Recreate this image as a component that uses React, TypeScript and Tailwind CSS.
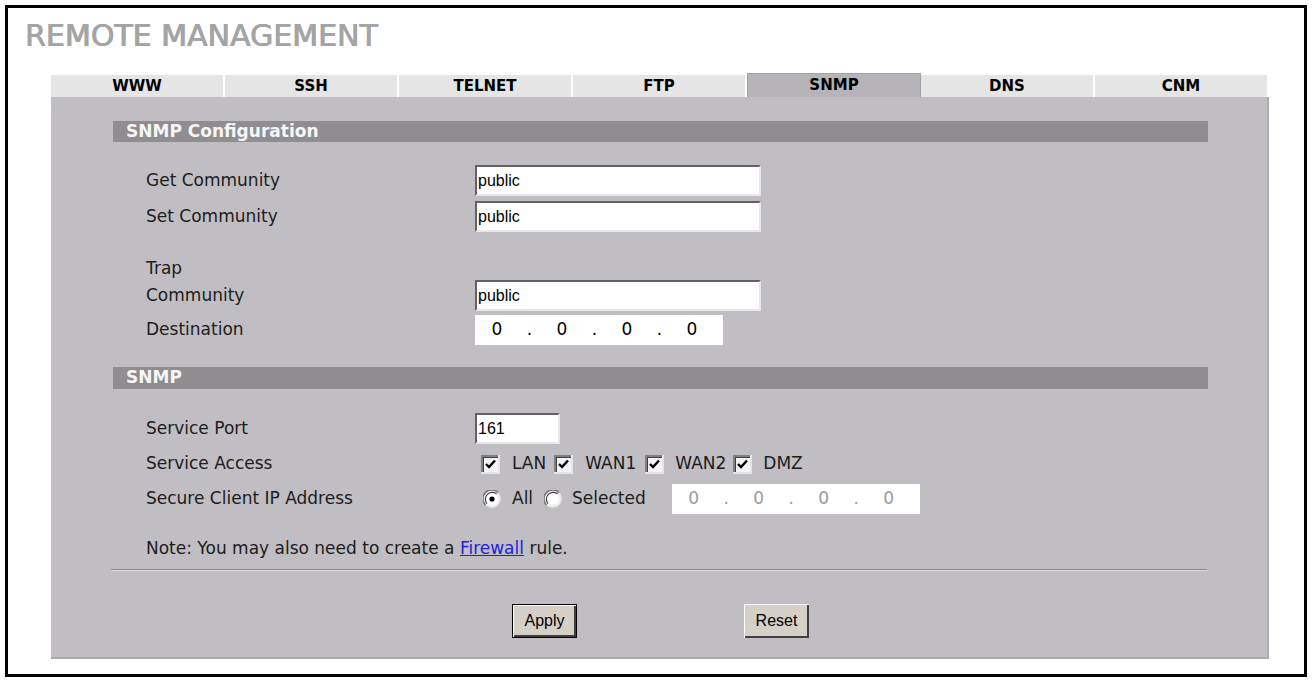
import React from "react";

const tabs = ["WWW", "SSH", "TELNET", "FTP", "SNMP", "DNS", "CNM"];

function CheckBox() {
    return (
        <svg width="19" height="19" viewBox="0 0 19 19" className="shrink-0">
            <rect x="0" y="0" width="19" height="19" fill="#ffffff" />
            <rect x="0" y="0" width="19" height="2" fill="#808080" />
            <rect x="0" y="0" width="2" height="19" fill="#808080" />
            <rect x="2" y="2" width="15" height="1" fill="#404040" />
            <rect x="2" y="2" width="1" height="15" fill="#404040" />
            <rect x="17" y="0" width="2" height="19" fill="#e6e4e7" />
            <rect x="0" y="17" width="19" height="2" fill="#e6e4e7" />
            <rect x="3" y="3" width="14" height="14" fill="#f4f4f4" />
            <path d="M5 9 L8 12 L14 5.5" fill="none" stroke="#000" strokeWidth="2.4" />
        </svg>
    );
}

function Radio({ checked }: { checked?: boolean }) {
    return (
        <svg width="18" height="18" viewBox="0 0 18 18" className="shrink-0">
            <circle cx="9" cy="9" r="8.5" fill="#f2f2f2" />
            <path d="M2.5 15 A8.5 8.5 0 0 1 15 2.5" fill="none" stroke="#7a7a7a" strokeWidth="1.6" />
            <path d="M3.8 13.6 A7 7 0 0 1 13.6 3.8" fill="none" stroke="#3c3c3c" strokeWidth="1.2" />
            <path d="M15 3 A8.5 8.5 0 0 1 3 15" fill="none" stroke="#e4e4e4" strokeWidth="1.4" />
            <circle cx="9" cy="9" r="5.6" fill="#ffffff" />
            {checked && <circle cx="9" cy="9" r="2.6" fill="#000" />}
        </svg>
    );
}

function TextBox({ value, width }: { value: string; width: string }) {
    return (
        <input
            readOnly
            value={value}
            className={`${width} h-[31px] border-2 border-t-[#626262] border-l-[#626262] border-b-[#e8e6e9] border-r-[#e8e6e9] bg-white pl-[1px] font-['Liberation_Sans',sans-serif] text-[16px] text-black outline-none`}
        />
    );
}

function IpBox({ disabled }: { disabled?: boolean }) {
    const color = disabled ? "text-[#9a9a9a]" : "text-black";
    return (
        <div className={`flex h-[30px] w-[248px] items-center bg-white text-[17px] ${color}`}>
            {[0, 1, 2, 3].map((i) => (
                <React.Fragment key={i}>
                    <span className="w-[44px] text-center">0</span>
                    {i < 3 && <span className="w-[21px] text-center">.</span>}
                </React.Fragment>
            ))}
        </div>
    );
}

function SectionBar({ title, h }: { title: string; h: string }) {
    return (
        <div className={`${h} flex w-[1095px] items-center bg-[#8f8d90] pl-[13px] text-[17px] font-bold text-[#f6f6f6]`}>
            {title}
        </div>
    );
}

function Label({ children }: { children: React.ReactNode }) {
    return <div className="w-[329px] shrink-0 text-[17px] text-[#1c1c1c]">{children}</div>;
}

export default function App() {
    return (
        <div className="h-[682px] w-[1312px] bg-white p-[5px]">
            <div className="h-full border-[3px] border-black font-['DejaVu_Sans',sans-serif]">
                <h1 className="ml-[17px] mt-[13px] text-[30px] leading-[30px] text-[#a4a4a4] [text-shadow:0.6px_0_0_#a4a4a4,-0.3px_0_0_#a4a4a4]">
                    REMOTE MANAGEMENT
                </h1>

                <div className="ml-[43px] mt-[22px] flex h-[24px] items-end">
                    {tabs.map((t) => (
                        <div
                            key={t}
                            className={
                                t === "SNMP"
                                    ? "flex h-[24px] w-[174px] items-center justify-center border-x border-t border-[#a3a1a5] bg-[#b6b4b8] text-[15px] font-bold text-black"
                                    : "flex h-[22px] w-[174px] items-center justify-center border-r-2 border-white bg-[#e5e5e5] text-[15px] font-bold text-black"
                            }
                        >
                            {t}
                        </div>
                    ))}
                </div>

                <div className="ml-[43px] h-[562px] w-[1218px] border-b-2 border-r-2 border-[#acaaad] bg-[#c0bec2] pl-[62px] pt-[24px]">
                    <SectionBar title="SNMP Configuration" h="h-[21px]" />

                    <div className="pl-[33px]">
                        <div className="mt-[23px] flex items-center">
                            <Label>Get Community</Label>
                            <TextBox value="public" width="w-[286px]" />
                        </div>
                        <div className="mt-[5px] flex items-center">
                            <Label>Set Community</Label>
                            <TextBox value="public" width="w-[286px]" />
                        </div>
                        <div className="mt-[26px] h-[20px] text-[17px] leading-[20px] text-[#1c1c1c]">Trap</div>
                        <div className="mt-[2px] flex items-center">
                            <Label>Community</Label>
                            <TextBox value="public" width="w-[286px]" />
                        </div>
                        <div className="mt-[4px] flex items-center">
                            <Label>Destination</Label>
                            <IpBox />
                        </div>
                    </div>

                    <div className="mt-[22px]">
                        <SectionBar title="SNMP" h="h-[22px]" />
                    </div>

                    <div className="pl-[33px]">
                        <div className="mt-[24px] flex items-center">
                            <Label>Service Port</Label>
                            <TextBox value="161" width="w-[85px]" />
                        </div>
                        <div className="mt-[10px] flex h-[20px] items-center">
                            <Label>Service Access</Label>
                            <div className="ml-[6px] flex items-center text-[17px] text-[#1c1c1c]">
                                <CheckBox />
                                <span className="ml-[12px] mr-[8px]">LAN</span>
                                <CheckBox />
                                <span className="ml-[12px] mr-[9px]">WAN1</span>
                                <CheckBox />
                                <span className="ml-[11px] mr-[7px]">WAN2</span>
                                <CheckBox />
                                <span className="ml-[11px]">DMZ</span>
                            </div>
                        </div>
                        <div className="mt-[10px] flex h-[30px] items-center">
                            <Label>Secure Client IP Address</Label>
                            <div className="ml-[8px] flex items-center text-[17px] text-[#1c1c1c]">
                                <Radio checked />
                                <span className="ml-[11px] mr-[11px]">All</span>
                                <Radio />
                                <span className="ml-[10px] mr-[26px]">Selected</span>
                                <IpBox disabled />
                            </div>
                        </div>
                        <div className="mt-[24px] h-[20px] text-[17px] leading-[20px] text-[#1c1c1c]">
                            Note: You may also need to create a{" "}
                            <a href="#" className="text-[#2222dd] underline">Firewall</a> rule.
                        </div>
                    </div>

                    <div className="-ml-[2px] mt-[11px] w-[1096px] border-b border-t border-b-[#dcdadd] border-t-[#8a888b]" />

                    <div className="ml-[399px] mt-[33px] flex">
                        <button className="h-[34px] w-[65px] border border-black bg-[#d4d0c8] font-['Liberation_Sans',sans-serif] text-[16px] text-black shadow-[inset_1px_1px_0_#ffffff,inset_-2px_-2px_0_#404040]">
                            Apply
                        </button>
                        <button className="ml-[167px] h-[34px] w-[65px] bg-[#d4d0c8] font-['Liberation_Sans',sans-serif] text-[16px] text-black shadow-[inset_1px_1px_0_#ffffff,inset_-2px_-2px_0_#404040]">
                            Reset
                        </button>
                    </div>
                </div>
            </div>
        </div>
    );
}
